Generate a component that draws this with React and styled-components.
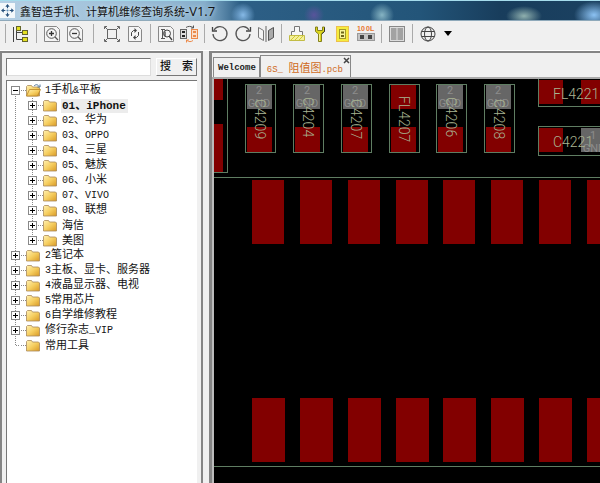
import { useState } from "react";
import styled, { createGlobalStyle } from "styled-components";

const tree = [
  {
    label: "1手机&平板",
    children: [
      "01、iPhone",
      "02、华为",
      "03、OPPO",
      "04、三星",
      "05、魅族",
      "06、小米",
      "07、VIVO",
      "08、联想",
      "海信",
      "美图",
    ],
  },
  { label: "2笔记本", children: [] },
  { label: "3主板、显卡、服务器", children: [] },
  { label: "4液晶显示器、电视", children: [] },
  { label: "5常用芯片", children: [] },
  { label: "6自学维修教程", children: [] },
  { label: "修行杂志_VIP", children: [] },
  { label: "常用工具" },
];

const parts = [
  { x: 31, name: "C4209", start: 20, gnd: true },
  { x: 79, name: "C4204", start: 18, gnd: true },
  { x: 127, name: "C4207", start: 20, gnd: true },
  { x: 175, name: "FL4207", start: 17, gnd: false },
  { x: 222, name: "C4206", start: 18, gnd: true },
  { x: 270, name: "C4208", start: 20, gnd: true },
];

const padColumns = [38, 86, 134, 182, 229, 277, 325, 373];

// Latin runs are set a little smaller than the Chinese text round them
const Mixed = ({ size = 10, children }) =>
  children
    .split(/([\x20-\x7e]+)/)
    .filter(Boolean)
    .map((run, i) =>
      /^[\x20-\x7e]/.test(run) ? (
        <Latin key={i} $size={size}>
          {run}
        </Latin>
      ) : (
        run
      )
    );

// used by the icon table below, so it has to come first
const IconText = styled.text`
  fill: #e8752f;
  font-family: "Liberation Sans", sans-serif;
  font-size: 7px;
  font-weight: 700;
`;

const Sheet = () => (
  <path d="M1.5 1.5h12l3 3v12h-15z" fill="#f4f4f4" stroke="#888" />
);

const icons = {
  目录: (
    <>
      <path d="M1.5 2v15M4.5 2v12.5H10M4.5 7.5H10M4.5 3h2" stroke="#444" fill="none" />
      <g fill="#e4e020" stroke="#66662a">
        <rect x="4.5" y="1.5" width="4" height="4" />
        <rect x="10.5" y="5.5" width="5" height="4" />
        <rect x="10.5" y="12.5" width="5" height="4" />
      </g>
    </>
  ),
  放大: (
    <>
      <Sheet />
      <circle cx="8.5" cy="8.5" r="4.8" fill="none" stroke="#555" />
      <path d="M6 8.5h5M8.5 6v5" stroke="#333" strokeWidth="1.3" />
      <path d="M12 12l3 3" stroke="#555" strokeWidth="1.3" />
    </>
  ),
  缩小: (
    <>
      <Sheet />
      <circle cx="8.5" cy="8.5" r="4.8" fill="none" stroke="#555" />
      <path d="M6 8.5h5" stroke="#333" strokeWidth="1.3" />
      <path d="M12 12l3 3" stroke="#555" strokeWidth="1.3" />
    </>
  ),
  适应窗口: (
    <g fill="none" stroke="#666">
      <rect x="4.5" y="4.5" width="9" height="9" />
      <path d="M1.5 4V1.5H4M14 1.5h2.5V4M16.5 14v2.5H14M4 16.5H1.5V14M2 2l2.5 2.5M16 2l-2.5 2.5M16 16l-2.5-2.5M2 16l2.5-2.5" />
    </g>
  ),
  刷新: (
    <>
      <path d="M2.5 1.5h10l3 3v12h-13z" fill="#f4f4f4" stroke="#888" />
      <path d="M5.5 11V7.5l2-2H9M12.5 7v3.5l-2 2H9" fill="none" stroke="#444" />
      <path d="M8.5 3v5l2.5-2.5zM9.5 10v5L7 12.5z" fill="#444" />
    </>
  ),
  查找元件: (
    <>
      <Sheet />
      <path d="M4 4.5h4M4 13.5h4M5.5 5v8" fill="none" stroke="#555" />
      <circle cx="10" cy="8.5" r="3.5" fill="none" stroke="#444" />
      <path d="M8 6.5V11M12 11l3 4" stroke="#444" strokeWidth="1.3" />
    </>
  ),
  对照: (
    <>
      <rect x=".5" y="4.5" width="6" height="9" fill="#ddd" stroke="#666" />
      <path d="M2 7h3M2 11h3" stroke="#222" strokeWidth="2" />
      <rect x="11.5" y="4.5" width="6" height="9" fill="#f9dfcb" stroke="#ec8a4b" />
      <path d="M13 7h3M13 11h3" stroke="#ec8a4b" strokeWidth="2" />
      <path d="M6 2.500c2-1.500 5-1.500 7 0M13.500 .5V3H11" fill="none" stroke="#555" />
      <path d="M13 15.500c-2 1.500-4 1.500-6 0M6.500 17.500V15H9" fill="none" stroke="#ec8a4b" />
    </>
  ),
  左转: (
    <>
      <path d="M3 5a7 7 0 1 1-1 4" fill="none" stroke="#555" strokeWidth="1.3" />
      <path d="M1.5 2v4H6" fill="none" stroke="#444" strokeWidth="1.3" />
    </>
  ),
  右转: (
    <>
      <path d="M15 5a7 7 0 1 0 1 4" fill="none" stroke="#555" strokeWidth="1.3" />
      <path d="M16.5 2v4H12" fill="none" stroke="#444" strokeWidth="1.3" />
    </>
  ),
  镜像: (
    <>
      <path d="M1.5 2.5l5 3v10l-5-3z" fill="#f4f4f4" stroke="#777" />
      <path d="M9 1v16" stroke="#666" />
      <path d="M16.5 2.5l-5 3v10l5-3z" fill="#aaa" stroke="#555" />
    </>
  ),
  图层: (
    <>
      <path d="M6.5 1.5h5v5h3v4h-11v-4h3z" fill="#f7f7f7" stroke="#777" />
      <path d="M1.5 10.5h15v5h-15z" fill="#f4f19a" stroke="#c2bc45" />
      <path d="M3 15l4-4M7 15l4-4M11 15l4-4" stroke="#d2c934" />
    </>
  ),
  维修: (
    <>
      <path d="M4.5 2v4.5l3 2.500v7.500h3V9l3-2.500V2h-2v3.500h-5V2z" fill="#ddd71c" stroke="#85811c" />
      <path d="M8.5 9v7" stroke="#f7f48a" />
      <path d="M13.5 2.5v4l-3 2.500" fill="none" stroke="#333" />
    </>
  ),
  引脚: (
    <>
      <rect x="2.5" y="1.5" width="12" height="15" fill="#f5ec3e" stroke="#ecc04b" />
      <rect x="5.5" y="4.5" width="6" height="9" fill="#f8f59b" stroke="#a3972a" />
      <path d="M7 7.5h3M7 11h3" stroke="#6e6618" strokeWidth="2" />
    </>
  ),
  阻值: (
    <>
      <IconText x="0" y="6">10</IconText>
      <IconText x="9" y="6">0L</IconText>
      <rect x=".5" y="8.5" width="17" height="7" fill="#c4c4c4" stroke="#999" />
      <path d="M3 10h4v4H3zM11 10h4v4h-4z" fill="#444" />
    </>
  ),
  分栏: (
    <>
      <rect x="1.5" y="1.5" width="15" height="15" fill="#ddd" stroke="#888" />
      <path d="M3 3h5.500v12H3zM9.500 3H15v12H9.500z" fill="#a2a2a2" />
    </>
  ),
  语言: (
    <g fill="none" stroke="#444">
      <circle cx="9" cy="9" r="7" />
      <ellipse cx="9" cy="9" rx="3.5" ry="7" />
      <path d="M2.5 6.5h13M2.5 11.5h13" />
    </g>
  ),
};

const groups = [
  ["目录"],
  ["放大", "缩小"],
  ["适应窗口", "刷新"],
  ["查找元件", "对照"],
  ["左转", "右转", "镜像"],
  ["图层", "维修", "引脚", "阻值"],
  ["分栏"],
  ["语言"],
];

const Folder = ({ open }) => (
  <FolderIcon viewBox="0 0 15 13" aria-hidden="true">
    <defs>
      <linearGradient id="folder" x1="0" y1="0" x2="1" y2="1">
        <stop offset="0" stopColor="#fff0b0" />
        <stop offset=".5" stopColor="#f6cf62" />
        <stop offset="1" stopColor="#d99a25" />
      </linearGradient>
    </defs>
    <path d="M.5 12V2.5l1-1h4l1 1.500h6l1 1V12z" fill="url(#folder)" stroke="#a8895a" strokeWidth=".8" />
    {open && (
      <>
        <path d="M.5 12l3-6.500h11l-3 6.500z" fill="url(#folder)" stroke="#b98526" strokeWidth=".8" />
        <path d="M8 2c2-2 4-1.500 5 .5M14 .5V3h-2.500" fill="none" stroke="#4d7396" />
      </>
    )}
  </FolderIcon>
);

const Board = () => (
  <Canvas role="img" aria-label="6S 阻值图">
    <g fill="#820000">
      <rect y="0" width="9" height="21" />
      <rect y="45" width="9" height="48" />
      {padColumns.map((x) => (
        <g key={x}>
          <rect x={x} y="101" width="32" height="64" />
          <rect x={x} y="319" width="33" height="64" />
        </g>
      ))}
      <rect x="325" y="1" width="24" height="24" />
      <rect x="367" y="1" width="60" height="24" />
      <rect x="325" y="49" width="24" height="24" />
    </g>
    <rect x="367" y="49" width="24" height="24" fill="#666" />

    {parts.map(({ x, name, start, gnd }) => (
      <g key={name}>
        <rect x={x + 2} y="5" width="25" height="25" fill={gnd ? "#666" : "#820000"} />
        <rect x={x + 2} y="48" width="25" height="25" fill="#820000" />
        {gnd && (
          <>
            <PadText x={x + 14} y="15">2</PadText>
            <PadText x={x + 14} y="28">GND</PadText>
          </>
        )}
        <Outline x={x + 0.5} y="5.5" width="30" height="68" />
        <PartText transform={`translate(${x + 10} ${start}) rotate(90)`}>
          {name}
        </PartText>
      </g>
    ))}

    <Outline x="324.5" y="-4.5" width="90" height="32" />
    <Outline x="324.5" y="47.5" width="90" height="29" />
    <PadText x="379" y="60">1</PadText>
    <PadText x="380" y="73">GND</PadText>
    <PartText x="339" y="20">FL4221</PartText>
    <PartText x="339" y="68">C4221</PartText>
    <Outline x="-4.5" y="-4.5" width="18" height="98" />
    <Outline x="-4.5" y="98.5" width="4000" height="289" />
  </Canvas>
);

const Branch = ({ node, selected, onSelect }) => {
  const [open, setOpen] = useState(node.label.startsWith("1"));
  return (
    <li>
      <Row>
        {node.children ? (
          <Toggle
            $open={open}
            aria-label={node.label}
            aria-expanded={open}
            onClick={() => setOpen(!open)}
          />
        ) : (
          <Stub />
        )}
        <Dots />
        <Folder open={open} />
        <Label>
          <Mixed>{node.label}</Mixed>
        </Label>
      </Row>
      {open && (
        <SubList>
          {node.children.map((label) => (
            <li key={label}>
              <Row>
                <Toggle aria-label={label} />
                <Dots />
                <Folder />
                <Label $selected={label === selected} onClick={() => onSelect(label)}>
                  <Mixed size={label === selected ? 11 : 10}>{label}</Mixed>
                </Label>
              </Row>
            </li>
          ))}
        </SubList>
      )}
    </li>
  );
};

const App = () => {
  const [selected, setSelected] = useState("01、iPhone");
  return (
    <Window>
      <GlobalStyle />
      <TitleBar>
        <AppIcon viewBox="0 0 14 14" aria-hidden="true">
          <path d="M7 1l2 2.500H7.500V5h-1V3.500H5zM7 13l2-2.500H7.500V9h-1v1.500H5zM1 7l2.500-2v1.500H5v1H3.500V9zM13 7l-2.500-2v1.500H9v1h1.500V9z" fill="#27517c" />
          <circle cx="7" cy="7" r="1" fill="#5c8db5" />
        </AppIcon>
        <Title>
          鑫智造手机、计算机维修查询系统<TitleLatin>-V1.7</TitleLatin>
        </Title>
      </TitleBar>
      <Toolbar>
        {groups.map((group, i) => (
          <Group key={group[0]}>
            <Separator $wide={i === 2} />
            {group.map((name) => (
              <Tool key={name} aria-label={name}>
                <svg width="18" height="18" viewBox="0 0 18 18">
                  {icons[name]}
                </svg>
              </Tool>
            ))}
          </Group>
        ))}
        <Caret aria-label="选择语言">
          <svg width="10" height="6" viewBox="0 0 10 6">
            <path d="M1 0h8L5 5z" />
          </svg>
        </Caret>
      </Toolbar>
      <Body>
        <Sidebar>
          <Search onSubmit={(e) => e.preventDefault()}>
            <SearchInput aria-label="搜索" />
            <SearchButton>搜　索</SearchButton>
          </Search>
          <TreeBox>
            <TreeList>
              {tree.map((node) => (
                <Branch
                  key={node.label}
                  node={node}
                  selected={selected}
                  onSelect={setSelected}
                />
              ))}
            </TreeList>
          </TreeBox>
        </Sidebar>
        <Main>
          <Tabs>
            <Tab>
              <TabText>Welcome</TabText>
            </Tab>
            <Tab $active>
              <span>
                <Mixed size={9}>6S_ 阻值图.pcb</Mixed>
              </span>
              <Close aria-label="关闭">
                <svg width="7" height="7" viewBox="0 0 7 7">
                  <path d="M1 1l5 5M6 1L1 6" stroke="#444" strokeWidth="1.5" />
                </svg>
              </Close>
            </Tab>
          </Tabs>
          <Board />
        </Main>
      </Body>
    </Window>
  );
};

export default App;

const GlobalStyle = createGlobalStyle`
  * {
    box-sizing: border-box;
  }
  body {
    margin: 0;
    background: #f0f0f0;
    color: #111;
    font-family: "Liberation Mono", "Noto Sans CJK SC", monospace;
    font-size: 11px;
  }
  button,
  input {
    font: inherit;
    color: inherit;
    padding: 0;
  }
  ul {
    list-style: none;
    margin: 0;
    padding: 0;
  }
`;

const Window = styled.div`
  display: flex;
  flex-direction: column;
  min-height: 100vh;
`;

const TitleBar = styled.header`
  display: flex;
  align-items: center;
  height: 21px;
  border-top: 1px solid #a5dcec;
  border-bottom: 1px solid #8fa9ba;
  background:
    radial-gradient(circle at 243px 14px, #86b9e6, transparent 12px),
    radial-gradient(circle at 314px 14px, #58549b, transparent 10px),
    radial-gradient(circle at 382px 14px, #86b4c3, transparent 12px),
    radial-gradient(ellipse 18px 10px at 524px 15px, #8fb0ae, transparent),
    radial-gradient(ellipse 20px 14px at 594px 14px, #8cc2f3, transparent),
    linear-gradient(90deg, #b4cfe4, #9dbfd8 130px, #86aecb 205px, #2d5f86 240px, #235579 420px, #183d5c 500px, #1b4161);
`;

const AppIcon = styled.svg`
  width: 15px;
  height: 15px;
  background: #f3f8fb;
`;

const Title = styled.h1`
  margin: 0 0 0 5px;
  font-family: "Noto Sans CJK SC", sans-serif;
  font-size: 11px;
  font-weight: 400;
  line-height: 18px;
  white-space: nowrap;
  text-shadow: 0 0 4px #d8e8f3;
`;

const TitleLatin = styled.span`
  font-family: "Open Sans", sans-serif;
  font-size: 13px;
`;

const Toolbar = styled.div`
  display: flex;
  align-items: center;
  height: 30px;
  padding: 0 0 4px 1px;
  border-bottom: 1px solid #fff;
`;

const Group = styled.div`
  display: flex;
  align-items: center;
`;

const Separator = styled.span`
  width: ${({ $wide }) => ($wide ? 14 : 8)}px;
  height: 19px;
  background: linear-gradient(#aaa, #aaa) center / 1px 100% no-repeat;
`;

const Tool = styled.button`
  display: flex;
  align-items: center;
  justify-content: center;
  width: 23px;
  height: 22px;
  border: 0;
  background: none;
`;

const Caret = styled(Tool)`
  width: 18px;
`;

const Body = styled.div`
  display: flex;
  flex: 1;
`;

const Sidebar = styled.aside`
  display: flex;
  flex-direction: column;
  width: 203px;
  margin-right: 6px;
  padding: 5px 4px 0;
  border: 2px solid #858585;
  border-width: 2px 2px 0;
`;

const Search = styled.form`
  display: flex;
  gap: 5px;
  height: 18px;
  margin-bottom: 4px;
`;

const SearchInput = styled.input`
  flex: 1;
  min-width: 0;
  border: 1px solid #ddd;
  border-top-color: #777;
  border-left-color: #777;
  background: #fff;
`;

const SearchButton = styled.button`
  width: 41px;
  border: 1px solid #fff;
  border-right-color: #777;
  border-bottom-color: #777;
  background: #f0f0f0;
  font-size: 11px;
  font-weight: 500;
  line-height: 15px;
  white-space: nowrap;
`;

const TreeBox = styled.div`
  flex: 1;
  padding: 2px 4px;
  border: 1px solid #777;
  border-width: 1px 0 0 1px;
  background: #fff;
`;

const TreeList = styled.ul`
  background: repeating-linear-gradient(#888 0 1px, transparent 1px 2px) 4px 7px / 1px calc(100% - 14px) no-repeat;
`;

const SubList = styled.ul`
  padding-left: 17px;
  background: repeating-linear-gradient(#888 0 1px, transparent 1px 2px) 21px 0 / 1px calc(100% - 8px) no-repeat;
`;

const Row = styled.div`
  display: flex;
  align-items: center;
  height: 15px;
`;

const Toggle = styled.button`
  width: 9px;
  height: 9px;
  border: 1px solid #888;
  background:
    linear-gradient(#000, #000) center / 5px 1px no-repeat,
    linear-gradient(#000, #000) center / 1px ${({ $open }) => ($open ? 0 : 5)}px no-repeat,
    #fff;
`;

const Dots = styled.span`
  width: 6px;
  height: 1px;
  background: repeating-linear-gradient(90deg, transparent 0 1px, #888 1px 2px);
`;

const Stub = styled(Dots)`
  width: 5px;
  margin-left: 4px;
`;

const FolderIcon = styled.svg`
  width: 15px;
  height: 13px;
`;

const Label = styled.span`
  margin-left: 3px;
  padding: 0 2px 0 1px;
  line-height: 14px;
  white-space: nowrap;
  background: ${({ $selected }) => ($selected ? "#ececec" : "none")};
  font-weight: ${({ $selected }) => ($selected ? 700 : 400)};
`;

const Latin = styled.span`
  font-size: ${({ $size }) => $size}px;
`;

const Main = styled.main`
  display: flex;
  flex-direction: column;
  flex: 1;
  min-width: 0;
  border-top: 2px solid #858585;
  border-left: 3px solid #858585;
`;

const Tabs = styled.div`
  display: flex;
  align-items: flex-end;
  height: 26px;
  border-bottom: 2px solid #aaa;
`;

const Tab = styled.div`
  display: flex;
  align-items: center;
  height: ${({ $active }) => ($active ? 22 : 20)}px;
  padding: ${({ $active }) => ($active ? "0 0 0 6px" : "0 3px 0 4px")};
  margin-left: ${({ $active }) => ($active ? 0 : 1)}px;
  border: 1px solid #888;
  border-bottom: 0;
  color: ${({ $active }) => ($active ? "#cf6a1c" : "#222")};
  white-space: pre;
`;

const TabText = styled.span`
  font-size: 9px;
  font-weight: 700;
`;

const Close = styled.button`
  display: flex;
  align-self: flex-start;
  margin-top: 1px;
  border: 0;
  background: none;
`;

const Canvas = styled.svg`
  flex: 1;
  width: 100%;
  min-height: 400px;
  border-left: 2px solid #bbb;
  background: #000;
`;

const Outline = styled.rect`
  fill: none;
  stroke: #5f7d62;
`;

const PartText = styled.text`
  fill: #a9b592;
  font-family: Roboto, sans-serif;
  font-size: 14px;
  font-weight: 300;
`;

const PadText = styled.text`
  fill: #8c8c8c;
  font-family: Roboto, sans-serif;
  font-size: 11px;
  text-anchor: middle;
`;
